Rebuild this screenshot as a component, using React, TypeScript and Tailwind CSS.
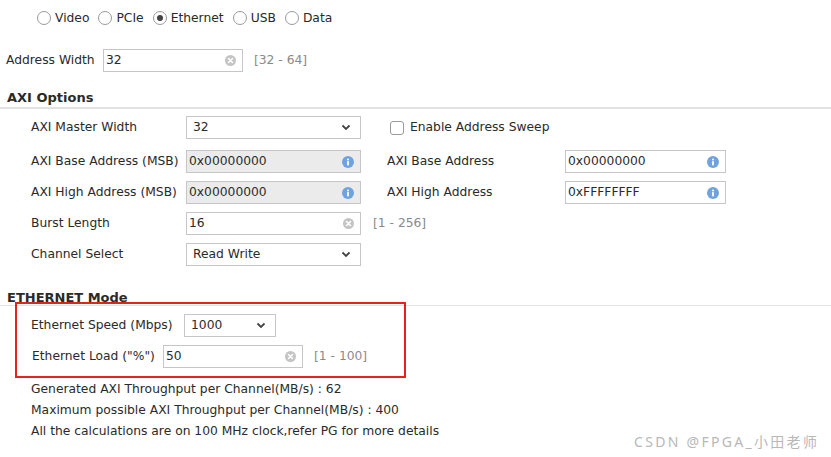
import React from "react";

const Clear = () => (
  <svg width="11" height="11" viewBox="0 0 11 11">
    <circle cx="5.5" cy="5.5" r="5.5" fill="#c4c4c4" />
    <path d="M3.5 3.5 L7.5 7.5 M7.5 3.5 L3.5 7.5" stroke="#fff" strokeWidth="1.6" strokeLinecap="round" />
  </svg>
);

const Info = () => (
  <svg width="12" height="12" viewBox="0 0 12 12">
    <circle cx="6" cy="6" r="6" fill="#6fa3df" />
    <circle cx="6" cy="3.4" r="1" fill="#fff" />
    <rect x="5.1" y="5" width="1.8" height="4.4" rx="0.6" fill="#fff" />
  </svg>
);

const Chevron = () => (
  <svg width="10" height="7" viewBox="0 0 10 7">
    <path d="M1.5 1.5 L5 5 L8.5 1.5" stroke="#444" strokeWidth="1.8" fill="none" />
  </svg>
);

const Radio = ({ label, checked }: { label: string; checked?: boolean }) => (
  <div className="flex items-center gap-[4px] mr-[9px]">
    <span className="w-[14px] h-[14px] rounded-full border border-[#9a9a9a] bg-white flex items-center justify-center">
      {checked && <span className="w-[6px] h-[6px] rounded-full bg-[#444]" />}
    </span>
    <span>{label}</span>
  </div>
);

const TextBox = ({ value, w, icon, disabled }: { value: string; w: string; icon: "clear" | "info"; disabled?: boolean }) => (
  <div className={`${w} h-[23px] border border-[#c6c6c6] flex items-center pl-[2px] pr-[6px] ${disabled ? "bg-[#ebebeb]" : "bg-white"}`}>
    <span className="flex-1">{value}</span>
    {icon === "clear" ? <Clear /> : <Info />}
  </div>
);

const Select = ({ value, w }: { value: string; w: string }) => (
  <div className={`${w} h-[23px] border border-[#c6c6c6] bg-white flex items-center pl-[6px] pr-[9px]`}>
    <span className="flex-1">{value}</span>
    <Chevron />
  </div>
);

const Range = ({ text, ml }: { text: string; ml: string }) => <span className={`${ml} text-[#8a8a8a]`}>{text}</span>;

export default function App() {
  return (
    <div
      className="relative w-[831px] h-[457px] overflow-hidden bg-white text-[12.3px] text-[#2a2a2a]"
      style={{ fontFamily: '"DejaVu Sans", sans-serif' }}
    >
      {/* protocol radios */}
      <div className="flex items-center pl-[37px] pt-[11px] h-[25px]">
        <Radio label="Video" />
        <Radio label="PCIe" />
        <Radio label="Ethernet" checked />
        <Radio label="USB" />
        <Radio label="Data" />
      </div>

      <div className="flex items-center pl-[6px] mt-[24px] h-[23px]">
        <span className="w-[97px]">Address Width</span>
        <TextBox value="32" w="w-[140px]" icon="clear" />
        <Range text="[32 - 64]" ml="ml-[11px]" />
      </div>

      <div className="mt-[18px] pl-[7px] font-bold text-[13px] leading-[15px]">AXI Options</div>
      <div className="mt-[2px] h-[2px] bg-[#e2e2e2]" />

      <div className="pl-[31px] pt-[7px] flex flex-col">
        <div className="flex items-center h-[23px]">
          <span className="w-[155px]">AXI Master Width</span>
          <Select value="32" w="w-[175px]" />
          <span className="ml-[29px] w-[14px] h-[14px] rounded-[3px] border border-[#9a9a9a] bg-white" />
          <span className="ml-[6px]">Enable Address Sweep</span>
        </div>
        <div className="flex items-center h-[23px] mt-[11px]">
          <span className="w-[155px]">AXI Base Address (MSB)</span>
          <TextBox value="0x00000000" w="w-[175px]" icon="info" disabled />
          <span className="ml-[26px] w-[178px]">AXI Base Address</span>
          <TextBox value="0x00000000" w="w-[161px]" icon="info" />
        </div>
        <div className="flex items-center h-[23px] mt-[8px]">
          <span className="w-[155px]">AXI High Address (MSB)</span>
          <TextBox value="0x00000000" w="w-[175px]" icon="info" disabled />
          <span className="ml-[26px] w-[178px]">AXI High Address</span>
          <TextBox value="0xFFFFFFFF" w="w-[161px]" icon="info" />
        </div>
        <div className="flex items-center h-[23px] mt-[8px]">
          <span className="w-[155px]">Burst Length</span>
          <TextBox value="16" w="w-[175px]" icon="clear" />
          <Range text="[1 - 256]" ml="ml-[12px]" />
        </div>
        <div className="flex items-center h-[23px] mt-[8px]">
          <span className="w-[155px]">Channel Select</span>
          <Select value="Read Write" w="w-[175px]" />
        </div>
      </div>

      <div className="mt-[24px] pl-[7px] font-bold text-[13px] leading-[15px]">ETHERNET Mode</div>
      <div className="relative mt-[-3px]">
        <div className="absolute left-0 right-0 top-[3px] h-[1px] bg-[#e2e2e2]" />
        <div className="relative ml-[15px] w-[391px] h-[76px] border-2 border-[#e1251b] pt-[10px] flex flex-col">
          <div className="flex items-center h-[23px]">
            <span className="ml-[14px] w-[153px]">Ethernet Speed (Mbps)</span>
            <Select value="1000" w="w-[92px]" />
          </div>
          <div className="flex items-center h-[23px] mt-[8px]">
            <span className="ml-[15px] w-[131px]">Ethernet Load ("%")</span>
            <TextBox value="50" w="w-[140px]" icon="clear" />
            <Range text="[1 - 100]" ml="ml-[11px]" />
          </div>
        </div>
      </div>

      <div className="pl-[31px] pt-[1px] flex flex-col leading-[21px]">
        <span>Generated AXI Throughput per Channel(MB/s) : 62</span>
        <span>Maximum possible AXI Throughput per Channel(MB/s) : 400</span>
        <span>All the calculations are on 100 MHz clock,refer PG for more details</span>
      </div>

      <span
        className="absolute left-[634px] top-[431px] text-[14px] tracking-[2.3px] text-[#b8b8b8]"
        style={{ fontFamily: '"Noto Sans", "Noto Sans CJK SC", sans-serif' }}
      >
        CSDN @FPGA_小田老师
      </span>
    </div>
  );
}
